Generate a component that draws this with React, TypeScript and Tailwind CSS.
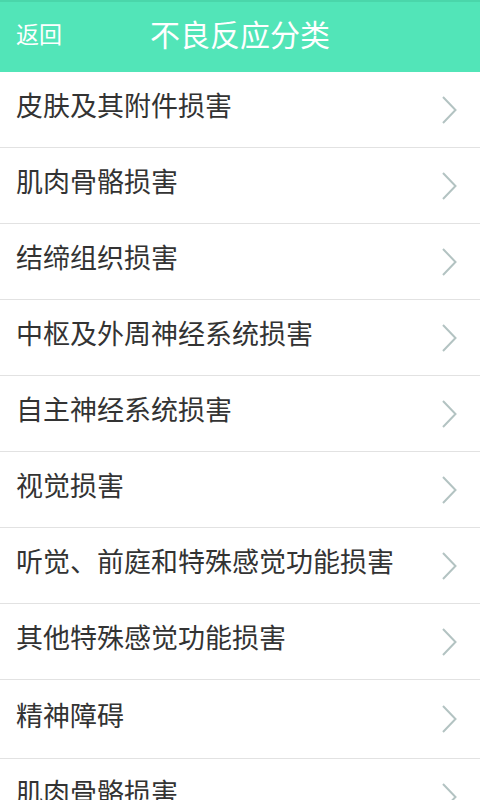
import React from "react"

const items = [
  "皮肤及其附件损害",
  "肌肉骨骼损害",
  "结缔组织损害",
  "中枢及外周神经系统损害",
  "自主神经系统损害",
  "视觉损害",
  "听觉、前庭和特殊感觉功能损害",
  "其他特殊感觉功能损害",
  "精神障碍",
  "肌肉骨骼损害",
]

function Chevron() {
  return (
    <svg width="16" height="30" viewBox="0 0 16 30" className="shrink-0">
      <path d="M2 2 L14.5 15 L2 28" fill="none" stroke="#b3c3c2" strokeWidth="2" />
    </svg>
  )
}

export default function App() {
  return (
    <div
      className="h-[800px] w-[480px] overflow-hidden bg-white"
      style={{ fontFamily: '"Noto Sans CJK SC", "Noto Sans", sans-serif' }}
    >
      {/* Header */}
      <header className="relative flex h-[72px] items-center border-t-2 border-[#4ad6aa] bg-[#52e5b8] pb-[8px]">
        <span className="pl-4 text-[23px] text-white">返回</span>
        <h1 className="absolute left-0 right-0 text-center text-[30px] text-white">不良反应分类</h1>
      </header>

      {/* List */}
      <ul>
        {items.map((label, i) => (
          <li
            key={i}
            className={`flex items-center justify-between border-b border-[#e2e2e2] pl-4 pr-[23px] ${
              i === 8 ? "h-[79px]" : "h-[76px]"
            }`}
          >
            <span className="pb-2 text-[27px] text-[#333333]">{label}</span>
            <Chevron />
          </li>
        ))}
      </ul>
    </div>
  )
}
